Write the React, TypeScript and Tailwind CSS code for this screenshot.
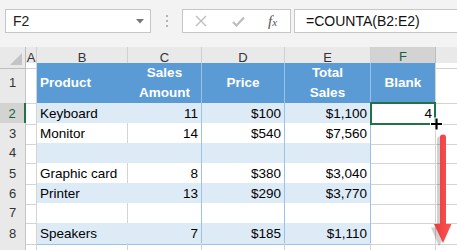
import React from "react";

const cols = ["A", "B", "C", "D", "E", "F"];

type Row = { n: number; product: string; amount: string; price: string; total: string };

const rows: Row[] = [
  { n: 2, product: "Keyboard", amount: "11", price: "$100", total: "$1,100" },
  { n: 3, product: "Monitor", amount: "14", price: "$540", total: "$7,560" },
  { n: 4, product: "", amount: "", price: "", total: "" },
  { n: 5, product: "Graphic card", amount: "8", price: "$380", total: "$3,040" },
  { n: 6, product: "Printer", amount: "13", price: "$290", total: "$3,770" },
  { n: 7, product: "", amount: "", price: "", total: "" },
  { n: 8, product: "Speakers", amount: "7", price: "$185", total: "$1,110" },
];

const grid = "grid grid-cols-[26px_11px_91px_74px_83px_86px_65px_1fr]";

function FormulaBar() {
  return (
    <div className="h-[47px] bg-[#f3f3f3] flex items-start pt-[9px] pl-[5px]">
      <div className="w-[146px] h-[24px] bg-white border border-[#c6c6c6] flex items-center justify-between pl-[7px] pr-[6px]">
        <span className="text-[14px] text-[#222]">F2</span>
        <svg width="8" height="5" viewBox="0 0 8 5">
          <path d="M0 0 H8 L4 4.5 Z" fill="#777" />
        </svg>
      </div>
      <div className="w-[31px] h-[24px] flex flex-col items-center justify-center gap-[3px]">
        <span className="w-[2px] h-[2px] bg-[#b4b4b4]" />
        <span className="w-[2px] h-[2px] bg-[#b4b4b4]" />
        <span className="w-[2px] h-[2px] bg-[#b4b4b4]" />
      </div>
      <div className="w-[109px] h-[24px] bg-white border border-[#c6c6c6] flex items-center">
        <div className="w-[36px] flex justify-center">
          <svg width="12" height="12" viewBox="0 0 12 12">
            <path d="M1 1 L11 11 M11 1 L1 11" stroke="#bdbdbd" strokeWidth="1.4" />
          </svg>
        </div>
        <div className="w-[38px] flex justify-center">
          <svg width="13" height="11" viewBox="0 0 13 11">
            <path d="M1 6 L4.5 9.5 L12 1.5" stroke="#bdbdbd" strokeWidth="2.2" fill="none" />
          </svg>
        </div>
        <div className="flex-1 flex justify-center pr-[2px]">
          <span className="font-['Liberation_Serif',serif] italic text-[#555] text-[15px] leading-none">
            f<span className="text-[11px]">x</span>
          </span>
        </div>
      </div>
      <div className="ml-[3px] flex-1 h-[24px] bg-white border border-[#c6c6c6] border-r-0 flex items-center pl-[11px]">
        <span className="text-[14px] text-[#111]">=COUNTA(B2:E2)</span>
      </div>
    </div>
  );
}

function ColumnHeaders() {
  return (
    <div className={`${grid} h-[16px] bg-[#e9e9e9] text-[13px] text-[#333]`}>
      <div className="relative border-r border-b border-[#bdbdbd]">
        <svg className="absolute right-[3px] bottom-[3px]" width="12" height="12" viewBox="0 0 12 12">
          <path d="M12 0 V12 H0 Z" fill="#c4c4c4" />
        </svg>
      </div>
      {cols.map((c) =>
        c === "F" ? (
          <div key={c} className="bg-[#d3d3d3] border-r border-[#bdbdbd] border-b-2 border-b-[#217346] flex items-center justify-center text-[#1e5e3a]">
            {c}
          </div>
        ) : (
          <div key={c} className="border-r border-b border-[#d0d0d0] flex items-center justify-center">
            {c}
          </div>
        )
      )}
      <div className="border-b border-[#d0d0d0]" />
    </div>
  );
}

function RowHeader({ n, active }: { n?: number; active?: boolean }) {
  if (active) {
    return (
      <div className="bg-[#d3d3d3] border-b border-[#bdbdbd] border-r-2 border-r-[#217346] flex items-center justify-center text-[13px] text-[#1e5e3a]">
        {n}
      </div>
    );
  }
  return (
    <div className="bg-[#e9e9e9] border-r border-b border-[#c6c6c6] flex items-center justify-center text-[13px] text-[#333]">
      {n}
    </div>
  );
}

function HeaderRow() {
  const th = "bg-[#5b9bd5] text-white font-bold border-b border-[#9bc2e6] flex items-center leading-[20px]";
  return (
    <div className={`${grid} h-[40px]`}>
      <RowHeader n={1} />
      <div className="border-r border-b border-[#d4d4d4]" />
      <div className={`${th} pl-[3px]`}>Product</div>
      <div className={`${th} border-r border-r-[#9bc2e6] justify-center text-center`}>
        Sales<br />Amount
      </div>
      <div className={`${th} border-r border-r-[#9bc2e6] justify-center`}>Price</div>
      <div className={`${th} border-r border-r-[#9bc2e6] justify-center text-center`}>
        Total<br />Sales
      </div>
      <div className={`${th} border-r border-r-[#d4d4d4] justify-center`}>Blank</div>
      <div className="border-b border-[#d4d4d4]" />
    </div>
  );
}

function DataRow({ r }: { r: Row }) {
  const band = r.n % 2 === 0;
  const bg = band ? "bg-[#ddebf7]" : "bg-white";
  const cell = `${bg} border-b border-[#9bc2e6] flex items-center pt-[1px]`;
  return (
    <div className={`${grid} h-[20px]`}>
      <RowHeader n={r.n} active={r.n === 2} />
      <div className="border-r border-b border-[#d4d4d4]" />
      <div className={`${cell} pl-[3px] border-r ${band ? "border-r-[#ddebf7]" : "border-r-[#d4d4d4]"}`}>{r.product}</div>
      <div className={`${cell} justify-end pr-[3px] border-r border-r-[#9bc2e6]`}>{r.amount}</div>
      <div className={`${cell} justify-end pr-[3px] border-r border-r-[#9bc2e6]`}>{r.price}</div>
      <div className={`${cell} justify-end pr-[3px] border-r border-r-[#9bc2e6]`}>{r.total}</div>
      {r.n === 2 ? (
        <div className="relative bg-white border-r border-b border-[#d4d4d4] flex items-center justify-end pr-[3px] pt-[1px]">
          4
          <div className="absolute -left-[1px] -top-[1px] -right-[1px] -bottom-[1px] border-2 border-[#217346]" />
          <div className="absolute -right-[4px] -bottom-[4px] w-[6px] h-[6px] bg-[#217346] border border-white" />
        </div>
      ) : (
        <div className="border-r border-b border-[#d4d4d4]" />
      )}
      <div className="border-b border-[#d4d4d4]" />
    </div>
  );
}

function LastRow() {
  return (
    <div className={`${grid} h-[20px]`}>
      <RowHeader />
      <div className="border-r border-[#d4d4d4]" />
      <div className="border-r border-[#d4d4d4]" />
      <div className="border-r border-[#d4d4d4]" />
      <div className="border-r border-[#d4d4d4]" />
      <div className="border-r border-[#d4d4d4]" />
      <div className="border-r border-[#d4d4d4]" />
      <div />
    </div>
  );
}

export default function App() {
  return (
    <div className="relative w-[457px] h-[250px] overflow-hidden bg-white font-['Liberation_Sans',Arial,sans-serif] text-[13.5px] text-black">
      <FormulaBar />
      <ColumnHeaders />
      <HeaderRow />
      {rows.map((r) => (
        <DataRow key={r.n} r={r} />
      ))}
      <LastRow />

      {/* fill cursor */}
      <svg className="absolute left-[429px] top-[117px]" width="15" height="14" viewBox="0 0 15 14">
        <path d="M7.5 0.5 V13.5 M1 7 H14" stroke="white" strokeWidth="4.5" />
        <path d="M7.5 1.5 V12.5 M2 7 H13" stroke="black" strokeWidth="2.2" />
      </svg>

      {/* red arrow */}
      <svg className="absolute left-[430px] top-[132px]" width="26" height="116" viewBox="0 0 26 116">
        <defs>
          <linearGradient id="rg" x1="0" x2="1" y1="0" y2="0">
            <stop offset="0" stopColor="#e83c3c" />
            <stop offset="1" stopColor="#ff5252" />
          </linearGradient>
        </defs>
        <path d="M8.5 6 Q8.5 3 11 3 Q13.5 3 13.5 6 V94 H20 L10.5 113 L2.5 94 H8.5 Z" fill="#000" opacity="0.18" transform="translate(-1.5 1.5)" />
        <path d="M10 5 Q10 2.5 13 2.5 Q16 2.5 16 5 V92 H21.5 L13 111 L4 92 H10 Z" fill="url(#rg)" />
      </svg>
    </div>
  );
}
